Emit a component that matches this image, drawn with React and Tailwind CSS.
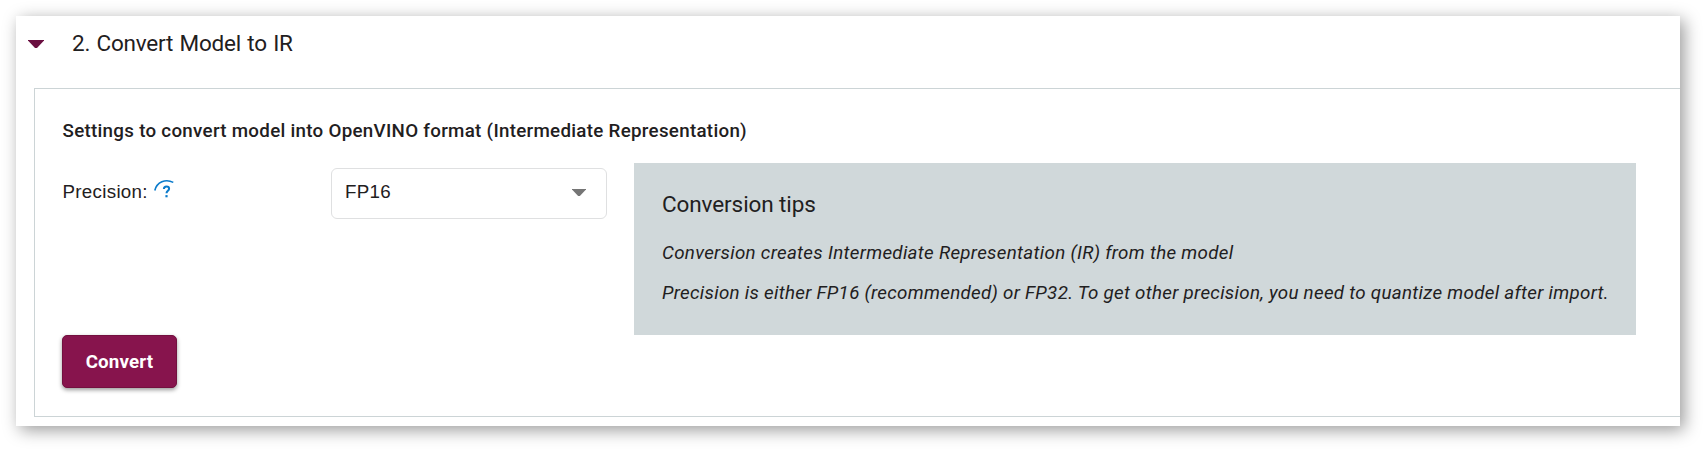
function Caret({ className }) {
  return (
    <svg viewBox="0 0 16 8" className={className} fill="currentColor" aria-hidden="true">
      <path d="M0 0h16v.6L9 8H7L0 .6z" />
    </svg>
  );
}

function HelpIcon() {
  return (
    <svg viewBox="0 0 20 20" className="h-5 w-5" fill="none" stroke="#0b7bcb" aria-hidden="true">
      <path d="M0.8 11.5C2.8 3.1 11.5-0.6 19.3 3.4" strokeWidth="1.6" />
      <path d="M9.9 10.1c0-1.9 1.2-2.6 2.6-2.6 1.6 0 2.6.8 2.6 2.2 0 2.1-2.6 2.1-2.6 4.6" strokeWidth="2" />
      <path d="M11.4 16.1h2.2v2.2h-2.2z" fill="#0b7bcb" stroke="none" />
    </svg>
  );
}

function Header() {
  return (
    <header className="flex h-[72px] items-center pb-4 pl-3">
      <Caret className="h-2 w-4 text-[#6a0f40]" />
      <h2 className="mb-[2px] ml-7 text-[22.5px] leading-[30px] tracking-[-0.2px] [word-spacing:0.9px]">
        2. Convert Model to IR
      </h2>
    </header>
  );
}

function Tips() {
  return (
    <aside className="h-[172px] w-[1002px] bg-[#d0d8da] pl-7 pt-[26px] whitespace-nowrap">
      <h3 className="text-[22.5px] leading-[30px] tracking-[-0.1px]">Conversion tips</h3>
      <p className="mt-[14px] text-[18.75px] leading-10 tracking-[0.3px] italic">
        Conversion creates Intermediate Representation (IR) from the model
      </p>
      <p className="text-[18.75px] leading-10 tracking-[0.29px] italic">
        Precision is either FP16 (recommended) or FP32. To get other precision, you need to quantize model after import.
      </p>
    </aside>
  );
}

export default function App() {
  return (
    <div className="h-[450px] w-[1704px] overflow-hidden bg-white pl-4 pt-4 font-['Roboto',sans-serif] text-[#1f2021]">
      <main className="h-[410px] w-[1664px] bg-white shadow-[4px_4px_16px_rgba(0,0,0,0.4)]">
        <Header />
        <section className="ml-[18px] h-[329px] border-y border-l border-[#ccd4d6] pl-[27px] pt-7">
          <h4 className="pl-[0.5px] text-[18.75px] leading-[28px] font-medium tracking-[0.29px]">
            Settings to convert model into OpenVINO format (Intermediate Representation)
          </h4>
          <div className="mt-[18px] flex items-start">
            <div className="flex h-[58px] w-[269px] items-center">
              <span className="pl-[0.5px] font-['Liberation_Sans',sans-serif] text-[18.75px] leading-7 tracking-[0.3px]">
                Precision:
              </span>
              <span className="mb-[6px] ml-[6px]">
                <HelpIcon />
              </span>
            </div>
            <button className="mt-[5px] flex h-[51px] w-[276px] items-center justify-between rounded-md border border-[#dfe0e1] pr-5 pb-[2px] pl-[13px] font-['Liberation_Sans',sans-serif] text-[18.75px] tracking-[0.3px]">
              FP16
              <Caret className="h-[7px] w-[14px] text-[#757575]" />
            </button>
            <div className="ml-[27px]">
              <Tips />
            </div>
          </div>
          <button className="flex h-[53px] w-[115px] items-center justify-center rounded-[5px] border border-[#73103f] bg-[#87144d] pt-[2px] text-[18.75px] font-bold tracking-[0.15px] text-white shadow-[0_2px_4px_rgba(0,0,0,0.4)]">
            Convert
          </button>
        </section>
      </main>
    </div>
  );
}
